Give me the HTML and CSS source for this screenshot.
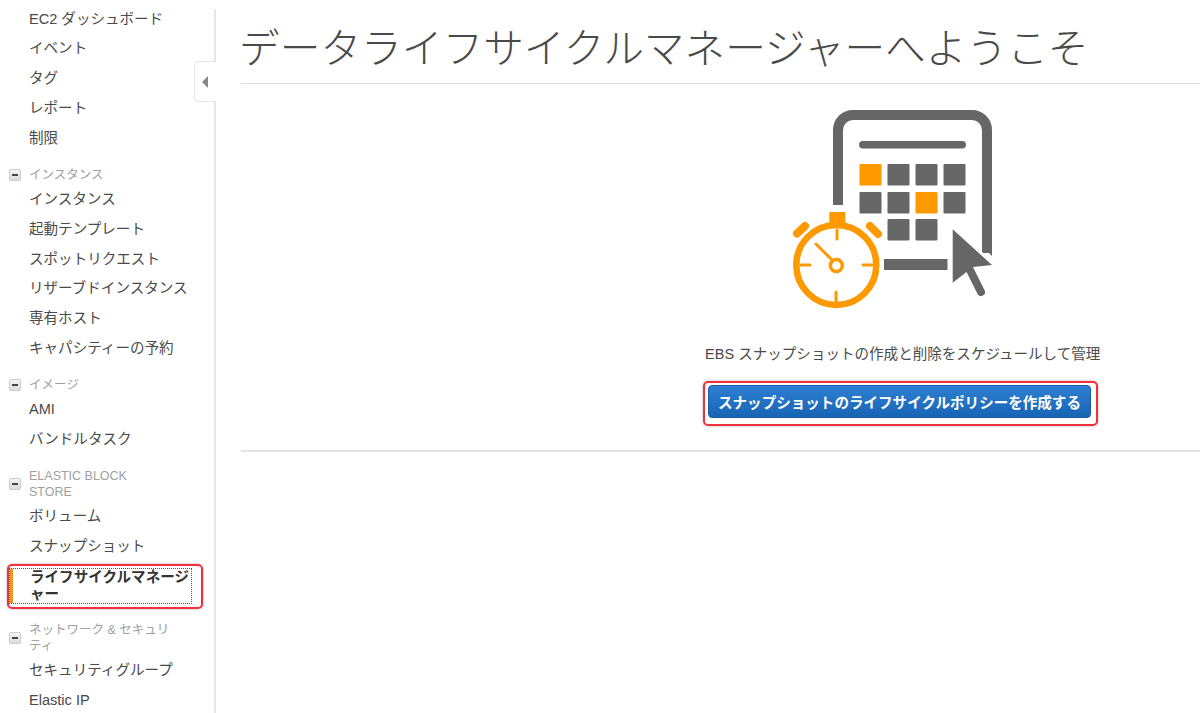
FILE: index.html
```html
<!DOCTYPE html>
<html lang="ja">
<head>
<meta charset="utf-8">
<title>データライフサイクルマネージャー</title>
<link rel="stylesheet" href="styles.css">
</head>
<body>
<div class="page">
  <nav class="sidebar">
    <ul class="nav-list">
      <li><a class="nav-item">EC2 ダッシュボード</a></li>
      <li><a class="nav-item">イベント</a></li>
      <li><a class="nav-item">タグ</a></li>
      <li><a class="nav-item">レポート</a></li>
      <li><a class="nav-item">制限</a></li>
    </ul>
    <section class="group">
      <h3 class="group-head"><span class="minus"></span><span class="group-title">インスタンス</span></h3>
      <ul class="nav-list">
        <li><a class="nav-item">インスタンス</a></li>
        <li><a class="nav-item">起動テンプレート</a></li>
        <li><a class="nav-item">スポットリクエスト</a></li>
        <li><a class="nav-item">リザーブドインスタンス</a></li>
        <li><a class="nav-item">専有ホスト</a></li>
        <li><a class="nav-item">キャパシティーの予約</a></li>
      </ul>
    </section>
    <section class="group">
      <h3 class="group-head"><span class="minus"></span><span class="group-title">イメージ</span></h3>
      <ul class="nav-list">
        <li><a class="nav-item">AMI</a></li>
        <li><a class="nav-item">バンドルタスク</a></li>
      </ul>
    </section>
    <section class="group">
      <h3 class="group-head"><span class="minus"></span><span class="group-title">ELASTIC BLOCK STORE</span></h3>
      <ul class="nav-list">
        <li><a class="nav-item">ボリューム</a></li>
        <li><a class="nav-item">スナップショット</a></li>
        <li class="active-row"><a class="nav-item active">ライフサイクルマネージャー</a></li>
      </ul>
    </section>
    <section class="group">
      <h3 class="group-head"><span class="minus"></span><span class="group-title">ネットワーク &amp; セキュリティ</span></h3>
      <ul class="nav-list">
        <li><a class="nav-item">セキュリティグループ</a></li>
        <li><a class="nav-item">Elastic IP</a></li>
      </ul>
    </section>
    <div class="collapse-tab"><span class="collapse-arrow"></span></div>
  </nav>
  <main class="main">
    <h1 class="title">データライフサイクルマネージャーへようこそ</h1>
    <div class="hero">
      <svg class="hero-icon" viewBox="0 0 230 215" width="230" height="215" aria-hidden="true">
        <g fill="none" stroke="#666" stroke-width="10">
          <path d="M58 105V30a15 15 0 0 1 15-15H192a15 15 0 0 1 15 15V153"/>
        </g>
        <polygon points="202,146 212,156 212,130 202,130" fill="#666"/>
        <polygon points="200,150 212,161 212,170 200,170" fill="#fff"/>
        <rect x="104" y="159" width="63.500" height="11" fill="#666"/>
        <rect x="79" y="41" width="107" height="7.500" rx="3.700" fill="#666"/>
        <g fill="#666">
          <rect x="79.500" y="64" width="22" height="21.500" rx="1" fill="#f90"/>
          <rect x="107.500" y="64" width="22" height="21.500" rx="1"/>
          <rect x="135.500" y="64" width="22" height="21.500" rx="1"/>
          <rect x="163.500" y="64" width="22" height="21.500" rx="1"/>
          <rect x="79.500" y="92" width="22" height="21.500" rx="1"/>
          <rect x="107.500" y="92" width="22" height="21.500" rx="1"/>
          <rect x="135.500" y="92" width="22" height="21.500" rx="1" fill="#f90"/>
          <rect x="163.500" y="92" width="22" height="21.500" rx="1"/>
          <rect x="107.500" y="119" width="22" height="21.500" rx="1"/>
          <rect x="135.500" y="119" width="22" height="21.500" rx="1"/>
        </g>
        <polygon points="172.700,129.300 212,165 193,167 172.700,182.700" fill="#666"/>
        <path d="M186 162L201 192" stroke="#666" stroke-width="8" stroke-linecap="round" fill="none"/>
        <g fill="none" stroke="#f90">
          <circle cx="56.300" cy="165" r="40" stroke-width="6.500" fill="#fff"/>
          <path d="M57.300 112V126" stroke-width="16" stroke-linejoin="round"/>
          <path d="M17 133.500L25 126M98 134L90 126" stroke-width="8" stroke-linecap="round"/>
          <path d="M57 130V139M56 192V201M21 165H30M83 165H92" stroke-width="3" stroke-linecap="round"/>
          <path d="M36 144L51 159" stroke-width="3" stroke-linecap="round"/>
          <circle cx="56.300" cy="165.500" r="6" stroke-width="3.500"/>
        </g>
      </svg>
      <p class="lead">EBS スナップショットの作成と削除をスケジュールして管理</p>
      <div class="cta-wrap"><button class="cta" type="button">スナップショットのライフサイクルポリシーを作成する</button></div>
    </div>
  </main>
</div>
</body>
</html>
```

FILE: styles.css
```css
* { box-sizing: border-box; }
html, body { margin: 0; height: 100%; overflow: hidden; background: #fff; }
body {
  font-family: "Liberation Sans", "Noto Sans CJK JP", sans-serif;
  color: #444;
}
.page { display: flex; height: 713px; overflow: hidden; }
.sidebar {
  position: relative;
  flex: 0 0 216px;
  padding-top: 4.3px;
  background: linear-gradient(#e6e6e6, #e6e6e6) right 0 top 9px / 2px 100% no-repeat;
}
.nav-list { list-style: none; margin: 0; padding: 0; }
.nav-item {
  display: block;
  padding: 6.4px 18px 6.4px 29px;
  font-size: 14.56px;
  line-height: 17px;
  color: #4a4a4a;
}
.group { margin-top: 13.7px; }
.group-head {
  display: flex;
  align-items: center;
  margin: 0 0 1.7px;
  padding: 0 0 0 9px;
  font-size: 12.5px;
  font-weight: 400;
  line-height: 16px;
  color: #a0a0a0;
}
.group-title { max-width: 142px; }
.minus {
  flex: none;
  position: relative;
  width: 12px;
  height: 12px;
  margin-right: 8px;
  border: 1px solid #ccc;
  border-radius: 2px;
  background: linear-gradient(#f4f4f4, #ddd);
}
.minus::after {
  content: "";
  position: absolute;
  left: 2px;
  top: 4px;
  width: 6px;
  height: 2px;
  background: #444;
}
.active-row { position: relative; padding: 8px 25px 5px 10px; }
.active-row::after {
  content: "";
  position: absolute;
  left: 7px;
  top: 3px;
  right: 13px;
  bottom: -1px;
  border: 2px solid #f0303c;
  border-radius: 5px;
  box-shadow: 0 0 3px rgba(0,0,0,.3);
}
.nav-item.active {
  padding: 0 0 0 17px;
  border-left: 3px solid #e7961e;
  outline: 1px dotted #555;
  font-weight: 700;
  color: #333;
}
.collapse-tab {
  position: absolute;
  left: 194px;
  top: 61px;
  width: 22px;
  height: 41px;
  display: flex;
  align-items: center;
  padding-left: 7px;
  background: #fff;
  border: 1px solid #e6e6e6;
  border-right: 0;
  border-radius: 5px 0 0 5px;
}
.collapse-arrow {
  border-top: 6px solid transparent;
  border-bottom: 6px solid transparent;
  border-right: 6px solid #888;
}
.main { flex: 1; min-width: 0; padding-left: 25px; }
.title {
  margin: 0;
  height: 84px;
  padding-top: 25px;
  border-bottom: 1px solid #ddd;
  font-size: 40.700px;
  font-weight: 300;
  line-height: 48px;
  color: #4a4a4a;
  white-space: nowrap;
  text-indent: -2px;
}
.hero {
  padding: 16px 0 0 464px;
  height: 368px;
  border-bottom: 2px solid #e4e4e4;
}
.hero-icon { display: block; margin-left: 75px; }
.lead {
  margin: 30px 0 0;
  font-size: 14.56px;
  line-height: 18px;
  color: #4a4a4a;
  white-space: nowrap;
}
.cta-wrap {
  position: relative;
  width: 395px;
  margin: 18px 0 0 -2px;
  padding: 4px 7px 8px 5px;
  border: 0;
}
.cta-wrap::after {
  content: "";
  position: absolute;
  inset: 0;
  border: 2px solid #f0303c;
  border-radius: 5px;
  box-shadow: 0 0 3px rgba(0,0,0,.3);
}
.cta {
  display: block;
  width: 100%;
  height: 33px;
  padding: 0;
  border: 1px solid #1a5a9e;
  border-radius: 4px;
  background: linear-gradient(#2f80d2, #1764b4);
  color: #fff;
  font: 700 14.56px "Liberation Sans", "Noto Sans CJK JP", sans-serif;
  white-space: nowrap;
}
```
